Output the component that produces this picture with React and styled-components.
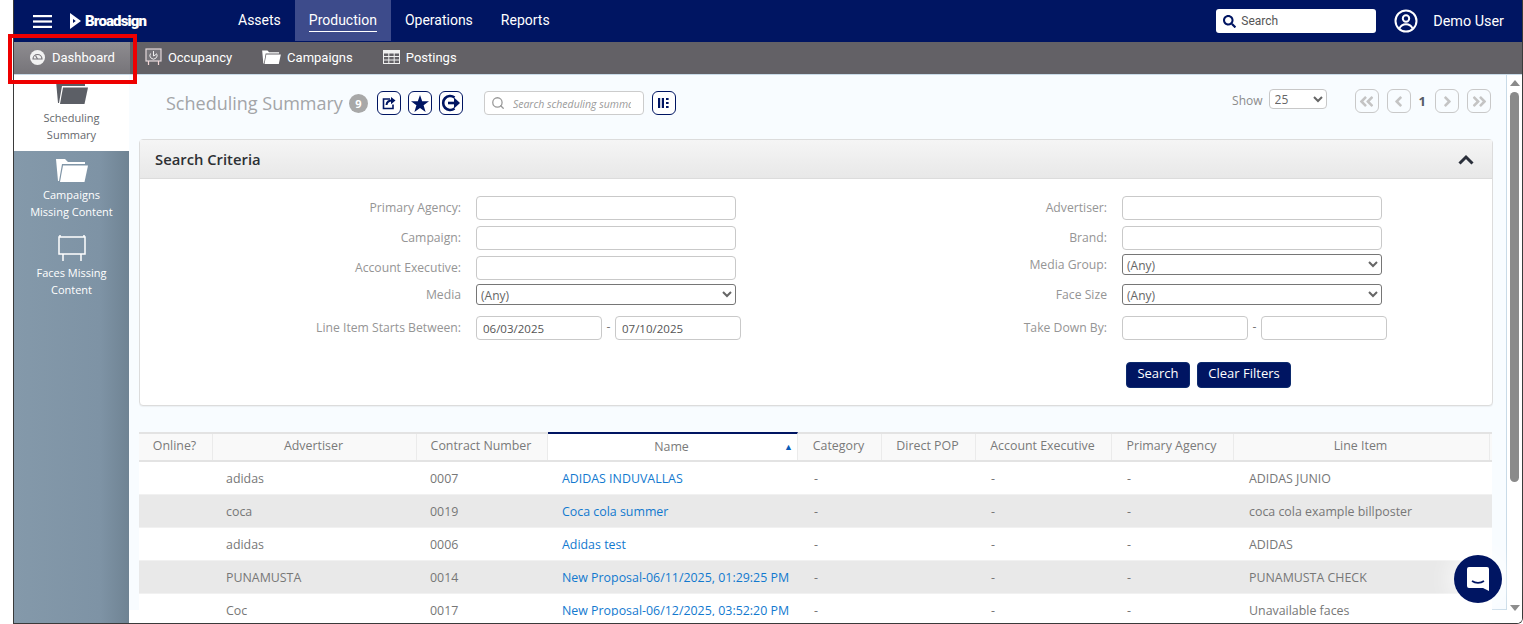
import React from 'react';
import styled, { createGlobalStyle } from 'styled-components';
import { FaAngleDoubleLeft, FaAngleDoubleRight, FaAngleLeft, FaAngleRight, FaSearch } from 'react-icons/fa';
import { Search as SearchIcon } from 'lucide-react';

const NAVY = '#001562';
const BODY_FONT = '"Open Sans", "Noto Sans", sans-serif';

const GlobalStyle = createGlobalStyle`
  html, body {
    margin: 0;
    height: 100%;
    overflow: hidden;
    background: #fff;
  }
  body {
    font-family: ${BODY_FONT};
  }
  * {
    box-sizing: border-box;
  }
`;

const Frame = styled.div`
  position: relative;
  width: 1523px;
  height: 624px;
  padding-left: 13px;
  overflow: hidden;
`;

const Window = styled.div`
  display: flex;
  flex-direction: column;
  height: 624px;
  border-left: 1px solid #3a3a3a;
  border-bottom: 1px solid #3a3a3a;
  border-right: 1px solid #3a3a3a;
  border-bottom-right-radius: 6px;
  overflow: hidden;
`;

const TopBar = styled.header`
  display: flex;
  align-items: stretch;
  flex: 0 0 42px;
  height: 42px;
  background: ${NAVY};
  font-family: Roboto, sans-serif;
  color: #fff;
`;

const MenuButton = styled.div`
  display: flex;
  align-items: center;
  width: 56px;
  padding-left: 19px;
`;

const Logo = styled.div`
  display: flex;
  align-items: center;
  gap: 4px;
  width: 154px;
  font-family: Roboto, sans-serif;
  font-size: 15px;
  font-weight: 900;
  letter-spacing: -0.85px;
`;

const MainTab = styled.div`
  display: flex;
  align-items: center;
  padding: 0 14px;
  font-size: 14px;
  background: ${p => (p.$active ? '#3d4b8b' : 'transparent')};
  height: 41px;
`;

const MainTabLabel = styled.span`
  padding: 2px 0 3px;
  border-bottom: ${p => (p.$active ? '1px solid #fff' : '1px solid transparent')};
`;

const TopRight = styled.div`
  display: flex;
  align-items: center;
  margin-left: auto;
  padding-right: 18px;
`;

const GlobalSearch = styled.div`
  display: flex;
  align-items: center;
  gap: 5px;
  width: 160px;
  height: 24px;
  margin-right: 18px;
  padding-left: 7px;
  background: #fff;
  border-radius: 3px;
  svg {
    flex: none;
    color: ${NAVY};
  }
`;

const GlobalSearchInput = styled.input`
  width: 120px;
  padding: 0 0 1px;
  border: 0;
  outline: 0;
  background: transparent;
  font-family: Roboto, sans-serif;
  font-size: 12px;
  &::placeholder {
    color: #555;
    opacity: 1;
  }
`;

const UserName = styled.span`
  margin-left: 15px;
  font-size: 14.4px;
`;

const SubBar = styled.nav`
  display: flex;
  flex: 0 0 33px;
  height: 33px;
  background: #636166;
  color: #fff;
  font-family: Roboto, sans-serif;
  font-size: 13px;
  font-weight: 400;
  border-bottom: 1px solid #c9dbe8;
`;

const SubTab = styled.div`
  display: flex;
  align-items: center;
  gap: ${p => (p.$active ? 7 : 6)}px;
  height: 32px;
  padding: ${p => (p.$active ? '0 15px 2px 16px' : '0 15px 2px')};
  background: ${p => (p.$active ? 'linear-gradient(#8e8c90, #767479)' : 'transparent')};
`;

const Body = styled.div`
  display: flex;
  flex: 1;
  min-height: 0;
`;

const Side = styled.aside`
  flex: 0 0 115px;
  background: linear-gradient(90deg, #8499aa 0%, #7e93a5 75%, #6f8393 100%);
`;

const SideItem = styled.div`
  display: flex;
  flex-direction: column;
  align-items: center;
  height: ${p => p.$h}px;
  padding-top: ${p => p.$top}px;
  background: ${p => (p.$active ? '#fff' : 'transparent')};
  color: ${p => (p.$active ? '#66686c' : '#fff')};
  font-size: 11px;
  line-height: 17px;
  text-align: center;
  svg {
    flex: none;
  }
`;

const SideLabel = styled.div`
  margin-top: ${p => p.$gap}px;
`;

const Content = styled.main`
  flex: 1;
  min-width: 0;
  display: flex;
  background: #fff;
`;

const Scroller = styled.div`
  flex: 1;
  min-width: 0;
  height: 535px;
  padding-left: 10px;
  background: linear-gradient(#c9dbe8, #c9dbe8) no-repeat right bottom / 100px 1px, #f8fcff;
  border-right: 1px solid #c9dbe8;
`;

const Main = styled.div`
  width: 1354px;
  height: 541px;
  overflow: hidden;
`;

const TitleRow = styled.div`
  display: flex;
  align-items: center;
  height: 64px;
  padding: 0 0 8px 27px;
`;

const Title = styled.h1`
  margin: 0;
  color: #a3a5a8;
  font-size: 18px;
  font-weight: 400;
`;

const CountBadge = styled.span`
  display: flex;
  align-items: center;
  justify-content: center;
  width: 19px;
  height: 19px;
  margin-left: 6px;
  border-radius: 50%;
  background: #a8a8a8;
  color: #fff;
  font-size: 11px;
  font-weight: 700;
`;

const IconButton = styled.span`
  display: flex;
  align-items: center;
  justify-content: center;
  width: 24px;
  height: 24px;
  margin-left: ${p => p.$ml}px;
  border: 1px solid ${NAVY};
  border-radius: 6px;
  color: ${NAVY};
  background: #fff;
`;

const TableSearch = styled.div`
  display: flex;
  align-items: center;
  gap: 8px;
  width: 160px;
  height: 24px;
  margin-left: 21px;
  padding-left: 6px;
  background: #fff;
  border: 1px solid #ccc;
  border-radius: 4px;
  svg {
    flex: none;
    color: #999;
  }
`;

const TableSearchInput = styled.input`
  width: 118px;
  padding: 1px 0 0;
  border: 0;
  outline: 0;
  background: transparent;
  font-family: ${BODY_FONT};
  font-size: 10.5px;
  font-style: italic;
  &::placeholder {
    color: #9a9a9a;
    opacity: 1;
  }
`;

const PagerArea = styled.div`
  display: flex;
  align-items: center;
  margin: -4px 2px 0 auto;
  color: #8b8b8b;
  font-size: 12px;
`;

const ShowLabel = styled.span`
  margin-top: -2px;
`;

const ShowSelect = styled.select`
  width: 58px;
  height: 20px;
  margin: -4px 28px 0 6px;
  padding: 0 0 0 1px;
  border: 1px solid #c8c8c8;
  border-radius: 4px;
  background: #fff;
  color: #666;
  font-family: ${BODY_FONT};
  font-size: 12px;
`;

const PageButton = styled.span`
  display: flex;
  align-items: center;
  justify-content: center;
  width: 24px;
  height: 24px;
  margin-right: 8px;
  border: 1px solid #c9c9c9;
  border-radius: 6px;
  color: #c4c4c4;
  &:last-child {
    margin-right: 0;
  }
`;

const PageNumber = styled.span`
  margin: 0 9px 0 0;
  color: #555b66;
  font-size: 13px;
  font-weight: 700;
`;

const Panel = styled.section`
  width: 1354px;
  height: 267px;
  background: #fff;
  border: 1px solid #dcdcdc;
  border-radius: 4px;
  box-shadow: 0 1px 1px rgba(0, 0, 0, 0.05);
`;

const PanelHead = styled.div`
  display: flex;
  align-items: center;
  justify-content: space-between;
  height: 39px;
  padding: 0 18px 0 15px;
  background: linear-gradient(#f5f5f5, #e8e8e8);
  border-bottom: 1px solid #dcdcdc;
  color: #2d3034;
  font-size: 14.8px;
  font-weight: 600;
`;

const FormGrid = styled.div`
  display: grid;
  grid-template-columns: 597px 1fr;
  padding-top: 14px;
`;

const FormCol = styled.div`
  display: flex;
  flex-direction: column;
`;

const FormRow = styled.div`
  display: flex;
  align-items: center;
  flex: none;
  height: ${p => p.$h || 30}px;
  margin-top: ${p => p.$mt || 0}px;
  color: #959595;
  font-size: 12.2px;
`;

const FormLabel = styled.label`
  flex: none;
  width: ${p => p.$w}px;
  padding: 0 15px ${p => (p.$select ? 0 : 2)}px 0;
  text-align: right;
`;

const TextBox = styled.input`
  flex: none;
  width: ${p => p.$w || 260}px;
  height: 24px;
  padding: 0 6px;
  border: 1px solid #c9c9c9;
  border-radius: 4px;
  outline: 0;
  background: #fff;
  color: #555;
  font-family: ${BODY_FONT};
  font-size: 11.5px;
`;

const SelectBox = styled.select`
  flex: none;
  width: 260px;
  height: 21px;
  padding: 1px 0 0;
  border: 1px solid #767676;
  border-radius: 3px;
  background: #fff;
  color: #666;
  font-family: ${BODY_FONT};
  font-size: 12px;
`;

const DateDash = styled.span`
  flex: none;
  width: 13px;
  margin-top: -3px;
  text-align: center;
  color: #777;
`;

const Actions = styled.div`
  display: flex;
  gap: 7px;
  margin-top: 12px;
  margin-left: 389px;
`;

const Button = styled.span`
  display: flex;
  align-items: center;
  justify-content: center;
  width: ${p => p.$w}px;
  height: 26px;
  padding-bottom: 4px;
  background: ${NAVY};
  border: 1px solid #0c2a6d;
  border-radius: 4px;
  color: #fff;
  font-size: 13px;
`;

const Table = styled.div`
  width: 1353px;
  margin-top: 26px;
  font-size: 12.4px;
  color: #777;
`;

const Cols = '74px 204px 131px 250px 84px 94px 136px 122px 256px';

const HeadRow = styled.div`
  display: grid;
  grid-template-columns: ${Cols};
  height: 30px;
  background: #f9f9f9;
  border-top: 2px solid #e3e3e3;
  border-bottom: 2px solid #e3e3e3;
`;

const HeadCell = styled.div`
  position: relative;
  display: flex;
  align-items: center;
  justify-content: center;
  padding: 0 2px 3px 0;
  border-right: 1px solid #ebebeb;
  color: #7a7a7a;
  ${p =>
    p.$sorted &&
    `
    background: #fff;
    margin-top: -2px;
    border-top: 2px solid ${NAVY};
    padding: 0 2px 1px 0;
  `}
`;

const SortMark = styled.span`
  position: absolute;
  right: 4px;
  top: 6px;
  color: #0b5cb8;
  font-size: 9px;
`;

const Row = styled.div`
  display: grid;
  grid-template-columns: ${Cols};
  align-items: center;
  height: 33px;
  background: ${p => (p.$alt ? '#e9e9e9' : '#fff')};
  border-bottom: 1px solid #f1f1f1;
`;

const Cell = styled.div`
  padding-left: ${p => p.$pl || 13}px;
  white-space: nowrap;
  color: ${p => (p.$link ? '#1279cf' : 'inherit')};
`;

const ScrollBar = styled.div`
  flex: 0 0 15px;
  display: flex;
  flex-direction: column;
  align-items: center;
  background: #fff;
`;

const ScrollArrow = styled.div`
  width: 0;
  height: 0;
  border-left: 5px solid transparent;
  border-right: 5px solid transparent;
  ${p =>
    p.$down
      ? 'border-top: 6px solid #8a8a8a; margin: auto 0 12px;'
      : 'border-bottom: 6px solid #8a8a8a; margin: 5px 0 6px;'}
`;

const ScrollThumb = styled.div`
  width: 9px;
  height: 390px;
  border-radius: 5px;
  background: #8a8a8a;
`;

const ChatBubble = styled.div`
  position: absolute;
  left: 1454px;
  top: 555px;
  display: flex;
  align-items: center;
  justify-content: center;
  width: 48px;
  height: 48px;
  border-radius: 50%;
  background: ${NAVY};
  box-shadow: 0 0 22px 6px rgba(255, 255, 255, 0.65);
`;

const RedMark = styled.div`
  position: absolute;
  left: 8px;
  top: 34px;
  width: 129px;
  height: 50px;
  border: 4px solid #ee0000;
  pointer-events: none;
`;

const BarsIcon = () => (
  <svg width="19" height="13" viewBox="0 0 19 13" fill="#fff">
    <rect width="19" height="2.2" />
    <rect y="5.4" width="19" height="2.2" />
    <rect y="10.8" width="19" height="2.2" />
  </svg>
);

const BroadsignMark = () => (
  <svg width="11" height="16" viewBox="0 0 11 16">
    <path fillRule="evenodd" d="M0 0l11 8-11 8zM3 6v4l2.8-2z" fill="#fff" />
  </svg>
);

const GaugeIcon = () => (
  <svg width="15" height="15" viewBox="0 0 15 15">
    <circle cx="7.5" cy="7.5" r="7.5" fill="#f2f2f2" />
    <path d="M3 9a4.5 4.5 0 0 1 9 0z" fill="none" stroke="#77757a" strokeWidth="1.2" />
    <path d="M7.5 9 5.5 5.5" stroke="#77757a" strokeWidth="1.2" />
  </svg>
);

const BoardClockIcon = () => (
  <svg width="17" height="18" viewBox="0 0 17 18">
    <rect x="1" y="1" width="15" height="12" fill="#77757a" stroke="#e4d7da" strokeWidth="1.2" />
    <path d="M3.5 13v4M13.5 13v4" stroke="#f3d4d4" strokeWidth="1.2" />
    <path d="M8.5 3v5l2.5-1.5M5.5 5.5a3.6 3.6 0 1 0 6 0" fill="none" stroke="#eee" strokeWidth="1" />
  </svg>
);

const FolderIcon = ({ width, height, color }) => (
  <svg width={width} height={height} viewBox="0 0 32 24" fill={color}>
    <path d="M0 1h9l3 3h17v2H6L3 23H2z" />
    <path d="M7 7.5h25L28.5 24H4z" />
  </svg>
);

const GridIcon = () => (
  <svg width="17" height="14" viewBox="0 0 17 14" fill="none" stroke="#f0f0f0" strokeWidth="1">
    <rect x="0" y="0" width="17" height="3.5" fill="#f0f0f0" stroke="none" />
    <rect x="0.5" y="0.5" width="16" height="13" />
    <path d="M0 6.5h17M0 10h17M5.8 3v11M11.2 3v11" />
  </svg>
);

const UserIcon = () => (
  <svg width="24" height="24" viewBox="0 0 24 24" fill="none" stroke="#fff" strokeWidth="2">
    <circle cx="12" cy="12" r="10.5" />
    <circle cx="12" cy="9.5" r="3.2" />
    <path d="M5.5 19.5c1.2-3 3.6-4.3 6.5-4.3s5.3 1.3 6.5 4.3" />
  </svg>
);

const ShareIcon = () => (
  <svg width="14" height="14" viewBox="0 0 14 14" fill="none" stroke={NAVY} strokeWidth="1.6">
    <path d="M8 3H1.5v9.5h9.5V8.5" />
    <path d="M4.5 9c.3-3 2.5-4.4 5.5-4.4" strokeWidth="2" />
    <path d="M9 1l4.5 3.6L9 8.2z" fill={NAVY} stroke="none" />
  </svg>
);

const StarIcon = () => (
  <svg width="18" height="17" viewBox="0 0 18 17" fill={NAVY}>
    <path d="M9 0l2.2 6.3H18l-5.4 4 2 6.7L9 13l-5.6 4 2-6.7L0 6.3h6.8z" />
  </svg>
);

const ExitIcon = () => (
  <svg width="20" height="18" viewBox="0 0 20 18" fill="none" stroke={NAVY} strokeWidth="2.6">
    <path d="M13.5 3.5A7 7 0 1 0 13.5 14.5" />
    <path d="M7 9h8" />
    <path d="M13 3.5 19 9l-6 5.5z" fill={NAVY} stroke="none" />
  </svg>
);

const ColumnsIcon = () => (
  <svg width="11" height="10" viewBox="0 0 11 10" fill={NAVY}>
    <rect x="0" y="0" width="2.2" height="10" />
    <rect x="3.8" y="0" width="2.2" height="10" />
    <rect x="8" y="0" width="2.6" height="2" />
    <rect x="8" y="4" width="2.6" height="2" />
    <rect x="8" y="8" width="2.6" height="2" />
  </svg>
);

const BillboardIcon = () => (
  <svg width="30" height="28" viewBox="0 0 30 28" fill="none" stroke="#fff" strokeWidth="1.5">
    <rect x="2" y="3" width="26" height="17" />
    <path d="M6 20v7M24 20v7M3 1v2M27 1v2" />
  </svg>
);

const CollapseIcon = () => (
  <svg width="16" height="11" viewBox="0 0 16 11" fill="none" stroke="#2a2f3a" strokeWidth="3">
    <path d="M1.5 9.5 8 3l6.5 6.5" />
  </svg>
);

const ChatIcon = () => (
  <svg width="24" height="26" viewBox="0 0 24 26">
    <path
      d="M3 1h18a2 2 0 0 1 2 2v22l-6-3H3a2 2 0 0 1-2-2V3a2 2 0 0 1 2-2z"
      fill="#fff"
    />
    <path d="M6 15c3.5 2.5 8.5 2.5 12 0" fill="none" stroke={NAVY} strokeWidth="1.6" />
  </svg>
);

const rows = [
  ['adidas', '0007', 'ADIDAS INDUVALLAS', 'ADIDAS JUNIO'],
  ['coca', '0019', 'Coca cola summer', 'coca cola example billposter'],
  ['adidas', '0006', 'Adidas test', 'ADIDAS'],
  ['PUNAMUSTA', '0014', 'New Proposal-06/11/2025, 01:29:25 PM', 'PUNAMUSTA CHECK'],
  ['Coc', '0017', 'New Proposal-06/12/2025, 03:52:20 PM', 'Unavailable faces'],
];

const headers = [
  'Online?',
  'Advertiser',
  'Contract Number',
  'Name',
  'Category',
  'Direct POP',
  'Account Executive',
  'Primary Agency',
  'Line Item',
];

const AnySelect = () => (
  <SelectBox defaultValue="any">
    <option value="any">(Any)</option>
  </SelectBox>
);

const App = () => (
  <Frame>
    <GlobalStyle />
    <Window>
      <TopBar>
        <MenuButton>
          <BarsIcon />
        </MenuButton>
        <Logo>
          <BroadsignMark />
          Broadsign
        </Logo>
        <MainTab>
          <MainTabLabel>Assets</MainTabLabel>
        </MainTab>
        <MainTab $active>
          <MainTabLabel $active>Production</MainTabLabel>
        </MainTab>
        <MainTab>
          <MainTabLabel>Operations</MainTabLabel>
        </MainTab>
        <MainTab>
          <MainTabLabel>Reports</MainTabLabel>
        </MainTab>
        <TopRight>
          <GlobalSearch>
            <FaSearch size={13} />
            <GlobalSearchInput placeholder="Search" />
          </GlobalSearch>
          <UserIcon />
          <UserName>Demo User</UserName>
        </TopRight>
      </TopBar>
      <SubBar>
        <SubTab $active>
          <GaugeIcon />
          Dashboard
        </SubTab>
        <SubTab>
          <BoardClockIcon />
          Occupancy
        </SubTab>
        <SubTab>
          <FolderIcon width={19} height={14} color="#fff" />
          Campaigns
        </SubTab>
        <SubTab>
          <GridIcon />
          Postings
        </SubTab>
      </SubBar>
      <Body>
        <Side>
          <SideItem $active $h={76} $top={5}>
            <FolderIcon width={32} height={24} color="#5c5f66" />
            <SideLabel $gap={5}>
              Scheduling
              <br />
              Summary
            </SideLabel>
          </SideItem>
          <SideItem $h={78} $top={7}>
            <FolderIcon width={32} height={24} color="#fff" />
            <SideLabel $gap={4}>
              Campaigns
              <br />
              Missing Content
            </SideLabel>
          </SideItem>
          <SideItem $h={80} $top={5}>
            <BillboardIcon />
            <SideLabel $gap={2}>
              Faces Missing
              <br />
              Content
            </SideLabel>
          </SideItem>
        </Side>
        <Content>
          <Scroller>
            <Main>
              <TitleRow>
                <Title>Scheduling Summary</Title>
                <CountBadge>9</CountBadge>
                <IconButton $ml={9}>
                  <ShareIcon />
                </IconButton>
                <IconButton $ml={7}>
                  <StarIcon />
                </IconButton>
                <IconButton $ml={7}>
                  <ExitIcon />
                </IconButton>
                <TableSearch>
                  <SearchIcon size={14} strokeWidth={2.2} />
                  <TableSearchInput placeholder="Search scheduling summary" />
                </TableSearch>
                <IconButton $ml={8}>
                  <ColumnsIcon />
                </IconButton>
                <PagerArea>
                  <ShowLabel>Show</ShowLabel>
                  <ShowSelect defaultValue="25">
                    <option value="25">25</option>
                  </ShowSelect>
                  <PageButton>
                    <FaAngleDoubleLeft size={17} />
                  </PageButton>
                  <PageButton>
                    <FaAngleLeft size={17} />
                  </PageButton>
                  <PageNumber>1</PageNumber>
                  <PageButton>
                    <FaAngleRight size={17} />
                  </PageButton>
                  <PageButton>
                    <FaAngleDoubleRight size={17} />
                  </PageButton>
                </PagerArea>
              </TitleRow>
              <Panel>
                <PanelHead>
                  Search Criteria
                  <CollapseIcon />
                </PanelHead>
                <FormGrid>
                  <FormCol>
                    <FormRow>
                      <FormLabel $w={336}>Primary Agency:</FormLabel>
                      <TextBox />
                    </FormRow>
                    <FormRow>
                      <FormLabel $w={336}>Campaign:</FormLabel>
                      <TextBox />
                    </FormRow>
                    <FormRow>
                      <FormLabel $w={336}>Account Executive:</FormLabel>
                      <TextBox />
                    </FormRow>
                    <FormRow $h={23}>
                      <FormLabel $w={336} $select>
                        Media
                      </FormLabel>
                      <AnySelect />
                    </FormRow>
                    <FormRow $h={44}>
                      <FormLabel $w={336}>Line Item Starts Between:</FormLabel>
                      <TextBox $w={126} defaultValue="06/03/2025" />
                      <DateDash>-</DateDash>
                      <TextBox $w={126} defaultValue="07/10/2025" />
                    </FormRow>
                  </FormCol>
                  <FormCol>
                    <FormRow>
                      <FormLabel $w={385}>Advertiser:</FormLabel>
                      <TextBox />
                    </FormRow>
                    <FormRow>
                      <FormLabel $w={385}>Brand:</FormLabel>
                      <TextBox />
                    </FormRow>
                    <FormRow $h={23}>
                      <FormLabel $w={385} $select>
                        Media Group:
                      </FormLabel>
                      <AnySelect />
                    </FormRow>
                    <FormRow $h={23} $mt={7}>
                      <FormLabel $w={385} $select>
                        Face Size
                      </FormLabel>
                      <AnySelect />
                    </FormRow>
                    <FormRow $h={44}>
                      <FormLabel $w={385}>Take Down By:</FormLabel>
                      <TextBox $w={126} />
                      <DateDash>-</DateDash>
                      <TextBox $w={126} />
                    </FormRow>
                    <Actions>
                      <Button $w={64}>Search</Button>
                      <Button $w={94}>Clear Filters</Button>
                    </Actions>
                  </FormCol>
                </FormGrid>
              </Panel>
              <Table>
                <HeadRow>
                  {headers.map(h => (
                    <HeadCell key={h} $sorted={h === 'Name'}>
                      {h}
                      {h === 'Name' && <SortMark>▲</SortMark>}
                    </HeadCell>
                  ))}
                </HeadRow>
                {rows.map((r, i) => (
                  <Row key={r[2]} $alt={i % 2 === 1}>
                    <Cell />
                    <Cell>{r[0]}</Cell>
                    <Cell>{r[1]}</Cell>
                    <Cell $pl={14} $link>
                      {r[2]}
                    </Cell>
                    <Cell $pl={16}>-</Cell>
                    <Cell />
                    <Cell $pl={15}>-</Cell>
                    <Cell $pl={15}>-</Cell>
                    <Cell $pl={15}>{r[3]}</Cell>
                  </Row>
                ))}
              </Table>
            </Main>
          </Scroller>
          <ScrollBar>
            <ScrollArrow />
            <ScrollThumb />
            <ScrollArrow $down />
          </ScrollBar>
        </Content>
      </Body>
    </Window>
    <RedMark />
    <ChatBubble>
      <ChatIcon />
    </ChatBubble>
  </Frame>
);

export default App;
